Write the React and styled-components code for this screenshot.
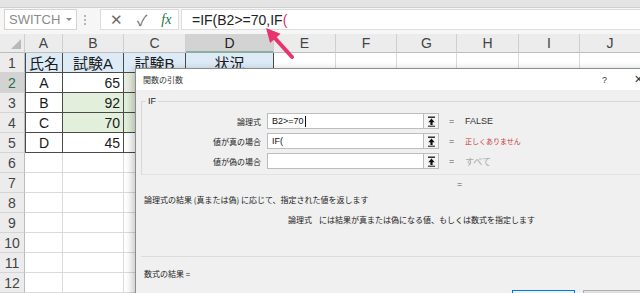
import React from "react";
import styled, { createGlobalStyle } from "styled-components";

const GlobalStyle = createGlobalStyle`
  html, body { margin: 0; padding: 0; background: #fff; overflow: hidden; }
  body { font-family: "Liberation Sans", "Noto Sans CJK JP", sans-serif; }
  * { box-sizing: border-box; }
`;

const Screen = styled.div`
  position: relative;
  width: 640px;
  height: 293px;
  overflow: hidden;
  background: #fff;
`;

const RibbonEdge = styled.div`
  height: 8px;
  background: #e4e4e4;
  border-bottom: 1px solid #d0d0d0;
`;

const FormulaBar = styled.div`
  display: flex;
  align-items: flex-start;
  height: 26px;
  padding: 1px 0 0 4px;
  background: #f6f6f6;
`;

const NameBox = styled.div`
  display: flex;
  align-items: center;
  justify-content: space-between;
  width: 73px;
  height: 21px;
  padding: 0 4px 0 4px;
  background: #fff;
  border: 1px solid #d4d4d4;
  color: #8a8a8a;
  font-size: 13px;
`;

const Caret = styled.span`
  width: 0;
  height: 0;
  border-left: 3px solid transparent;
  border-right: 3px solid transparent;
  border-top: 3px solid #8a8a8a;
`;

const Grip = styled.div`
  display: flex;
  flex-direction: column;
  justify-content: center;
  gap: 2px;
  width: 8px;
  height: 21px;
  margin: 0 11px 0 4px;
  align-items: center;
  span {
    width: 2px;
    height: 2px;
    background: #b5b5b5;
  }
`;

const FnBox = styled.div`
  display: flex;
  align-items: center;
  width: 79px;
  height: 21px;
  padding-left: 9px;
  gap: 14px;
  background: #fff;
  border: 1px solid #dcdcdc;
  color: #6b6b6b;
  font-size: 15px;
`;

const Fx = styled.span`
  color: #217346;
  font-family: "Liberation Serif", serif;
  font-style: italic;
  font-size: 14px;
`;

const FormulaInput = styled.div`
  flex: 1;
  height: 21px;
  margin-left: 2px;
  padding-left: 10px;
  display: flex;
  align-items: center;
  background: #fff;
  border: 1px solid #dcdcdc;
  border-right: none;
  color: #222;
  font-size: 14px;
`;

const Paren = styled.span`
  color: #e0306a;
`;

const Sheet = styled.div`
  display: grid;
  grid-template-columns: 25px 38px 61px 62px 88px 62px 61px 60px 62px 61px 61px;
  grid-template-rows: 19px repeat(12, 20px);
`;

const Corner = styled.div`
  background: #ececec;
  border-right: 1px solid #cfcfcf;
  border-bottom: 1px solid #bdbdbd;
  display: flex;
  align-items: flex-end;
  justify-content: flex-end;
  padding: 0 3px 3px 0;
  &::after {
    content: "";
    width: 0;
    height: 0;
    border-left: 10px solid transparent;
    border-bottom: 10px solid #b9b9b9;
  }
`;

const ColHead = styled.div`
  display: flex;
  align-items: center;
  justify-content: center;
  background: ${(p) => (p.$active ? "#d3d3d3" : "#ececec")};
  border-right: 1px solid #cfcfcf;
  border-bottom: ${(p) => (p.$active ? "2px solid #8faf9c" : "1px solid #bdbdbd")};
  color: ${(p) => (p.$active ? "#222" : "#444")};
  font-size: 14px;
`;

const RowHead = styled.div`
  display: flex;
  align-items: center;
  justify-content: center;
  background: ${(p) => (p.$active ? "#d3d3d3" : "#ececec")};
  border-right: 1px solid #bdbdbd;
  border-bottom: 1px solid #d4d4d4;
  color: ${(p) => (p.$active ? "#217346" : "#444")};
  font-size: 14px;
`;

const Cell = styled.div`
  display: flex;
  align-items: center;
  justify-content: ${(p) => (p.$align === "right" ? "flex-end" : "center")};
  padding: 0 3px;
  background: ${(p) => p.$fill || "#fff"};
  border-right: 1px solid ${(p) => (p.$table ? "#4a4a4a" : "#dadada")};
  border-bottom: 1px solid ${(p) => (p.$table ? "#4a4a4a" : "#dadada")};
  border-left: ${(p) => (p.$first ? "1px solid #4a4a4a" : "none")};
  color: #1a1a1a;
  font-size: ${(p) => (p.$head ? "15px" : "14px")};
  white-space: nowrap;
  overflow: hidden;
`;

const Arrow = styled.svg`
  position: absolute;
  left: 255px;
  top: 20px;
`;

const Dialog = styled.div`
  position: absolute;
  left: 135px;
  top: 68px;
  width: 520px;
  height: 240px;
  background: #f0f0f0;
  border: 1px solid #8d8d8d;
  box-shadow: -2px 2px 8px rgba(0, 0, 0, 0.25);
  font-family: "Noto Sans CJK JP", sans-serif;
  font-size: 8px;
  color: #222;
`;

const TitleBar = styled.div`
  display: flex;
  align-items: center;
  height: 21px;
  padding: 0 11px 0 7px;
  background: #fff;
  font-size: 8px;
  color: #333;
`;

const Title = styled.div`
  flex: 1;
`;

const TitleBtn = styled.span`
  font-family: "Liberation Sans", sans-serif;
  font-size: ${(p) => (p.$close ? "11px" : "9px")};
  color: #333;
  margin-left: ${(p) => (p.$close ? "27px" : "0")};
`;

const Body = styled.div`
  padding-left: 5px;
`;

const GroupBox = styled.div`
  margin-top: 11px;
  border-top: 1px solid #d8d8d8;
  border-left: 1px solid #d8d8d8;
  border-bottom: 1px solid #e2e2e2;
  padding-bottom: 5px;
`;

const GroupTitle = styled.div`
  width: fit-content;
  margin: -7px 0 0 4px;
  padding: 0 2px;
  background: #f0f0f0;
  font-family: "Liberation Sans", sans-serif;
  font-size: 9px;
  line-height: 12px;
`;

const ArgList = styled.div`
  display: grid;
  grid-template-columns: 125px 156px 16px 26px auto;
  grid-auto-rows: 16px;
  row-gap: 4px;
  padding-top: 6px;
  align-items: center;
`;

const ArgLabel = styled.div`
  text-align: right;
  padding-right: 6px;
  grid-column: 1;
`;

const ArgInput = styled.div`
  height: 16px;
  padding-left: 4px;
  display: flex;
  align-items: center;
  background: #fff;
  border: 1px solid #bdbdbd;
  border-right: none;
  font-family: "Liberation Sans", sans-serif;
  font-size: 9px;
  color: #111;
`;

const TextCaret = styled.span`
  display: inline-block;
  width: 1px;
  height: 11px;
  background: #111;
  margin-left: 1px;
`;

const CollapseBtn = styled.div`
  height: 16px;
  display: flex;
  align-items: center;
  justify-content: center;
  background: #f4f4f4;
  border: 1px solid #bdbdbd;
`;

const Eq = styled.div`
  padding-left: 10px;
  font-family: "Liberation Sans", sans-serif;
  font-size: 9px;
  color: #555;
`;

const ArgValue = styled.div`
  font-family: "Liberation Sans", "Noto Sans CJK JP", sans-serif;
  font-size: ${(p) => (p.$tone === "error" ? "7px" : "9px")};
  color: ${(p) => (p.$tone === "error" ? "#c8323a" : p.$tone === "muted" ? "#a8a8a8" : "#333")};
`;

const ResultEq = styled.div`
  height: 14px;
  margin-top: 2px;
  padding-left: 316px;
  display: flex;
  align-items: center;
  font-family: "Liberation Sans", sans-serif;
  font-size: 9px;
  color: #555;
`;

const Line = styled.div`
  height: 14px;
  margin-top: ${(p) => p.$gap || 0}px;
  padding-left: ${(p) => p.$indent || 3}px;
  display: flex;
  align-items: center;
  gap: 7px;
  white-space: nowrap;
`;

const Separator = styled.div`
  margin-top: 30px;
  border-top: 1px solid #dcdcdc;
`;

const ButtonRow = styled.div`
  display: flex;
  gap: 8px;
  margin-top: 10px;
  padding-left: 371px;
`;

const DlgButton = styled.div`
  width: ${(p) => (p.$primary ? "66px" : "74px")};
  height: 22px;
  background: ${(p) => (p.$primary ? "#e5f1fb" : "#e1e1e1")};
  border: 1px solid ${(p) => (p.$primary ? "#0078d7" : "#adadad")};
`;

const UpIcon = () => (
  <svg width="9" height="11" viewBox="0 0 9 11">
    <path d="M1 1.2h7" stroke="#111" strokeWidth="1.3" />
    <path d="M4.5 2.4 L1.3 6.2 H3.4 V9 H5.6 V6.2 H7.7 Z" fill="#111" />
    <path d="M1 10.2h7" stroke="#111" strokeWidth="1" />
  </svg>
);

const cols = ["A", "B", "C", "D", "E", "F", "G", "H", "I", "J"];
const green = "#e2efda";
const blue = "#ddebf7";

const table = [
  [
    { v: "氏名", fill: blue },
    { v: "試験A", fill: blue },
    { v: "試験B", fill: blue },
    { v: "状況", fill: blue },
  ],
  [{ v: "A" }, { v: "65", r: true }, { v: "", fill: "#eaeee2" }, { v: "" }],
  [{ v: "B" }, { v: "92", r: true, fill: green }, { v: "", fill: green }, { v: "" }],
  [{ v: "C" }, { v: "70", r: true, fill: green }, { v: "", fill: green }, { v: "" }],
  [{ v: "D" }, { v: "45", r: true }, { v: "" }, { v: "" }],
];

const args = [
  { label: "論理式", input: "B2>=70", caret: true, value: "FALSE" },
  { label: "値が真の場合", input: "IF(", value: "正しくありません", tone: "error" },
  { label: "値が偽の場合", input: "", value: "すべて", tone: "muted" },
];

export default function App() {
  const rows = [];
  for (let r = 1; r <= 12; r++) {
    rows.push(
      <RowHead key={"h" + r} $active={r === 2}>
        {r}
      </RowHead>
    );
    cols.forEach((c, ci) => {
      const t = r <= 5 && ci < 4 ? table[r - 1][ci] : null;
      rows.push(
        <Cell
          key={c + r}
          $table={!!t}
          $first={!!t && ci === 0}
          $head={r === 1}
          $fill={t && t.fill}
          $align={t && t.r ? "right" : "center"}
        >
          {t ? t.v : ""}
        </Cell>
      );
    });
  }

  return (
    <Screen>
      <GlobalStyle />
      <RibbonEdge />
      <FormulaBar>
        <NameBox>
          SWITCH
          <Caret />
        </NameBox>
        <Grip>
          <span />
          <span />
          <span />
        </Grip>
        <FnBox>
          <span>✕</span>
          <span>✓</span>
          <Fx>fx</Fx>
        </FnBox>
        <FormulaInput>
          =IF(B2&gt;=70,IF<Paren>(</Paren>
        </FormulaInput>
      </FormulaBar>
      <Sheet>
        <Corner />
        {cols.map((c) => (
          <ColHead key={c} $active={c === "D"}>
            {c}
          </ColHead>
        ))}
        {rows}
      </Sheet>

      <Arrow width="45" height="45" viewBox="0 0 45 45">
        <path d="M18 16 L37 37" stroke="#e8336d" strokeWidth="4" strokeLinecap="round" />
        <path d="M11 8 L25.5 13.7 L15.1 23.1 Z" fill="#e8336d" />
      </Arrow>

      <Dialog>
        <TitleBar>
          <Title>関数の引数</Title>
          <TitleBtn>?</TitleBtn>
          <TitleBtn $close>✕</TitleBtn>
        </TitleBar>
        <Body>
          <GroupBox>
            <GroupTitle>IF</GroupTitle>
            <ArgList>
              {args.map((a) => (
                <React.Fragment key={a.label}>
                  <ArgLabel>{a.label}</ArgLabel>
                  <ArgInput>
                    {a.input}
                    {a.caret && <TextCaret />}
                  </ArgInput>
                  <CollapseBtn>
                    <UpIcon />
                  </CollapseBtn>
                  <Eq>=</Eq>
                  <ArgValue $tone={a.tone}>{a.value}</ArgValue>
                </React.Fragment>
              ))}
            </ArgList>
          </GroupBox>
          <ResultEq>=</ResultEq>
          <Line $gap={1}>論理式の結果 (真または偽) に応じて、指定された値を返します</Line>
          <Line $gap={6} $indent={147}>
            <span>論理式</span>
            <span>には結果が真または偽になる値、もしくは数式を指定します</span>
          </Line>
          <Separator />
          <Line $gap={9}>数式の結果 =</Line>
          <ButtonRow>
            <DlgButton $primary />
            <DlgButton />
          </ButtonRow>
        </Body>
      </Dialog>
    </Screen>
  );
}
